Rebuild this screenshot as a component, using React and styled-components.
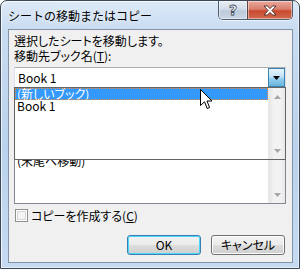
import React from 'react';
import * as styledComponents from 'styled-components';

const styled = styledComponents.default || styledComponents;
const { createGlobalStyle } = styledComponents;

const GlobalStyle = createGlobalStyle`
  html, body {
    margin: 0;
    padding: 0;
    background: #ffffff;
  }
  body {
    font-family: "Noto Sans CJK JP", "Noto Sans", sans-serif;
    font-size: 12px;
    color: #000;
  }
`;

const Window = styled.div`
  position: relative;
  width: 300px;
  height: 269px;
  box-sizing: border-box;
  border: 1px solid #3b4756;
  border-radius: 7px 7px 0 0;
  background: linear-gradient(180deg, #dde9f7 0px, #c9dcf1 28px, #bad2ed 55%, #c6dbf2 100%);
  box-shadow: inset 1px 1px 0 rgba(255, 255, 255, 0.75), inset -1px -1px 0 rgba(255, 255, 255, 0.5);
  display: flex;
  flex-direction: column;
  padding: 0 6px 5px 7px;
  overflow: hidden;
`;

const TitleBar = styled.div`
  height: 28px;
  display: flex;
  justify-content: space-between;
  align-items: flex-start;
`;

const Title = styled.div`
  padding-top: 7px;
  font-size: 12px;
  line-height: 16px;
  color: #000;
  text-shadow: 0 0 6px rgba(255, 255, 255, 0.95);
`;

const Caption = styled.div`
  display: flex;
  border: 1px solid #4f5d70;
  border-top: none;
  border-radius: 0 0 5px 5px;
  overflow: hidden;
  box-shadow: 0 1px 0 rgba(255, 255, 255, 0.6);
`;

const CapButton = styled.div`
  height: 18px;
  width: ${(p) => (p.$close ? 45 : 28)}px;
  display: flex;
  align-items: center;
  justify-content: center;
  box-sizing: border-box;
  border-left: ${(p) => (p.$close ? '1px solid #5a4040' : 'none')};
  background: ${(p) =>
    p.$close
      ? 'linear-gradient(180deg, #e9a99b 0%, #d98070 45%, #c8492f 55%, #d26a4f 100%)'
      : 'linear-gradient(180deg, #e6edf5 0%, #d3dde9 45%, #bccada 55%, #c8d6e6 100%)'};
  box-shadow: inset 0 0 0 1px rgba(255, 255, 255, 0.45);
`;

const HelpGlyph = styled.span`
  font-family: "DejaVu Sans", sans-serif;
  font-weight: bold;
  font-size: 14px;
  line-height: 14px;
  color: #fff;
  -webkit-text-stroke: 0.8px #3d4a5a;
  margin-top: -1px;
`;

const Client = styled.div`
  flex: 1;
  display: flex;
  flex-direction: column;
  border: 1px solid #8393a8;
  background: #f0f0f0;
  padding: 3px 6px 7px 5px;
  font-feature-settings: "palt";
`;

const Label = styled.div`
  height: 15px;
  line-height: 15px;
  font-size: 12px;
  white-space: nowrap;
  margin-top: ${(p) => p.$gap || 0}px;
`;

const Combo = styled.div`
  margin-top: 4px;
  height: 21px;
  box-sizing: border-box;
  border: 1px solid #abadb3;
  border-color: #abadb3 #dbdfe6 #e3e9ef #e2e3ea;
  background: #fff;
  display: flex;
  align-items: center;
  justify-content: space-between;
`;

const ComboText = styled.span`
  padding-left: 3px;
  line-height: 14px;
`;

const DropButton = styled.div`
  width: 17px;
  height: 19px;
  box-sizing: border-box;
  border: 1px solid #3c7fb1;
  background: linear-gradient(180deg, #e5f4fc 0%, #c4e5f6 45%, #98d1ef 55%, #68b3db 100%);
  display: flex;
  align-items: center;
  justify-content: center;
`;

const ListBox = styled.div`
  margin-top: 1px;
  height: 98px;
  box-sizing: border-box;
  border: 1px solid #828790;
  background: #fff;
  display: flex;
`;

const Items = styled.div`
  flex: 1;
  display: flex;
  flex-direction: column;
  padding-top: ${(p) => p.$offset || 0}px;
`;

const Item = styled.div`
  height: 12px;
  line-height: 12px;
  padding-left: 2px;
  white-space: nowrap;
  box-sizing: border-box;
  color: ${(p) => (p.$selected ? '#fff' : '#000')};
  background: ${(p) => (p.$selected ? '#3399ff' : 'transparent')};
  outline: ${(p) => (p.$selected ? '1px dotted #f08a3a' : 'none')};
  outline-offset: -1px;
`;

const ScrollBar = styled.div`
  width: 17px;
  display: flex;
  flex-direction: column;
  justify-content: space-between;
  background: linear-gradient(90deg, #e6e6e6 0%, #f2f2f2 30%, #f2f2f2 70%, #e8e8e8 100%);
  border-left: 1px solid #e9e9e9;
  box-sizing: border-box;
`;

const Arrow = styled.div`
  height: 17px;
  display: flex;
  align-items: center;
  justify-content: center;
`;

const CheckRow = styled.div`
  margin-top: 4px;
  height: 15px;
  display: flex;
  align-items: center;
  gap: 3px;
  padding-left: 1px;
`;

const CheckBox = styled.div`
  width: 13px;
  height: 13px;
  box-sizing: border-box;
  border: 1px solid #8e8f8f;
  background: #f4f4f4;
  box-shadow: inset 0 0 0 1px #fff, inset 0 0 0 2px #d6d6d6;
`;

const ButtonRow = styled.div`
  margin-top: auto;
  display: flex;
  justify-content: flex-end;
  gap: 10px;
  padding-right: 1px;
`;

const Button = styled.div`
  width: 74px;
  height: 20px;
  box-sizing: border-box;
  border: 1px solid ${(p) => (p.$default ? '#3c7fb1' : '#707070')};
  border-radius: 3px;
  background: linear-gradient(180deg, #f2f2f2 0%, #ebebeb 49%, #dddddd 50%, #cfcfcf 100%);
  box-shadow: inset 0 0 0 1px ${(p) => (p.$default ? '#48d8fb' : '#fcfcfc')};
  display: flex;
  align-items: center;
  justify-content: center;
  line-height: 14px;
`;

const DropList = styled.div`
  position: absolute;
  top: 86px;
  left: 13px;
  width: 272px;
  height: 73px;
  box-sizing: border-box;
  border: 1px solid #646464;
  background: #fff;
  display: flex;
  font-feature-settings: "palt";
`;

const Cursor = styled.svg`
  position: absolute;
  top: 88px;
  left: 199px;
`;

const UpArrow = () => (
  <svg width="7" height="4" viewBox="0 0 7 4">
    <path d="M3.5 0 L7 4 L0 4 Z" fill="#a7a7a7" />
  </svg>
);

const DownArrow = ({ color = '#a7a7a7' }) => (
  <svg width="7" height="4" viewBox="0 0 7 4">
    <path d="M0 0 L7 0 L3.5 4 Z" fill={color} />
  </svg>
);

export default function App() {
  return (
    <>
      <GlobalStyle />
      <Window>
        <TitleBar>
          <Title>シートの移動またはコピー</Title>
          <Caption>
            <CapButton>
              <HelpGlyph>?</HelpGlyph>
            </CapButton>
            <CapButton $close>
              <svg width="14" height="11" viewBox="0 0 14 11">
                <path
                  d="M1 1 H4.5 L7 3.6 L9.5 1 H13 L8.9 5.5 L13 10 H9.5 L7 7.4 L4.5 10 H1 L5.1 5.5 Z"
                  fill="#fff"
                  stroke="#4a2a26"
                  strokeWidth="0.9"
                  strokeLinejoin="round"
                />
              </svg>
            </CapButton>
          </Caption>
        </TitleBar>
        <Client>
          <Label>選択したシートを移動します。</Label>
          <Label>
            移動先ブック名(<u>T</u>):
          </Label>
          <Combo>
            <ComboText>Book 1</ComboText>
            <DropButton>
              <DownArrow color="#000" />
            </DropButton>
          </Combo>
          {/* label of the sheet list sits under the open drop-down */}
          <Label $gap={2} />
          <ListBox>
            <Items $offset={48}>
              <Item>(末尾へ移動)</Item>
            </Items>
            <ScrollBar>
              <Arrow>
                <UpArrow />
              </Arrow>
              <Arrow>
                <DownArrow />
              </Arrow>
            </ScrollBar>
          </ListBox>
          <CheckRow>
            <CheckBox />
            <span>
              コピーを作成する(<u>C</u>)
            </span>
          </CheckRow>
          <ButtonRow>
            <Button $default>OK</Button>
            <Button>キャンセル</Button>
          </ButtonRow>
        </Client>
        <DropList>
          <Items>
            <Item $selected>(新しいブック)</Item>
            <Item>Book 1</Item>
          </Items>
          <ScrollBar>
            <Arrow>
              <UpArrow />
            </Arrow>
            <Arrow>
              <DownArrow />
            </Arrow>
          </ScrollBar>
        </DropList>
        <Cursor width="13" height="21" viewBox="0 0 13 21">
          <path
            d="M0.5 0.5 L0.5 16.5 L4.5 12.8 L7.2 19.5 L9.6 18.5 L7 12 L12 12 Z"
            fill="#fff"
            stroke="#000"
            strokeWidth="1"
            strokeLinejoin="miter"
          />
        </Cursor>
      </Window>
    </>
  );
}
